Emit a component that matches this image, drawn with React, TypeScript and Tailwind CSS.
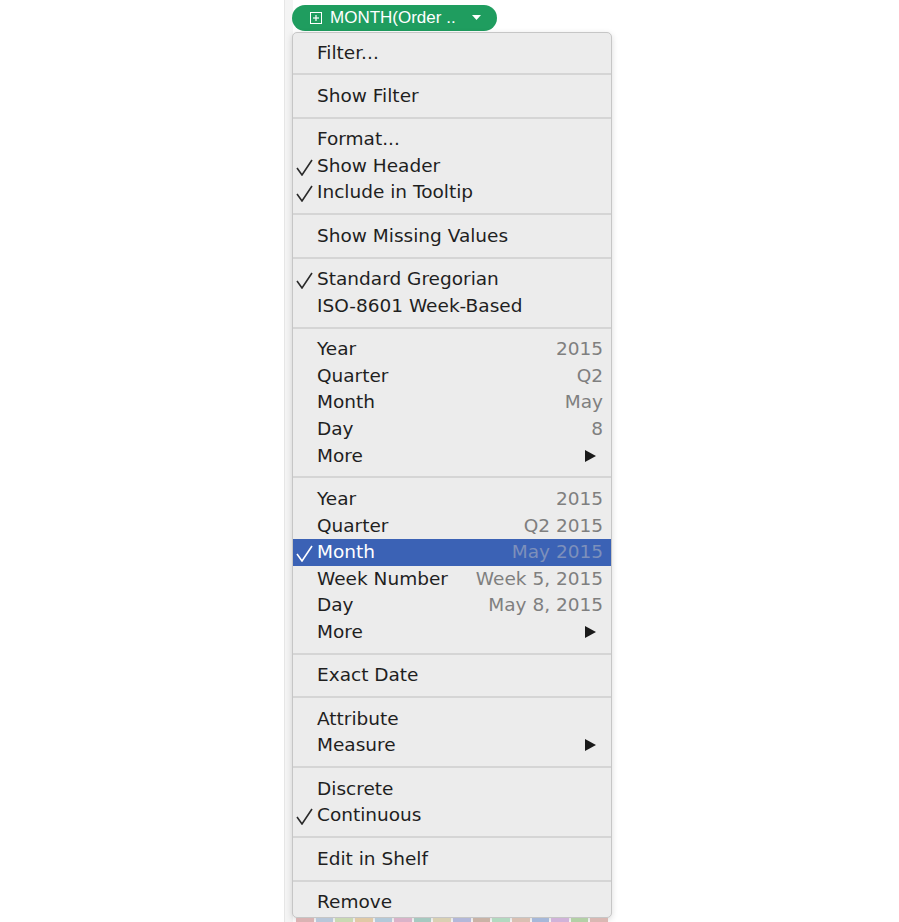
import React from 'react';

type Row = {
  label: string;
  checked?: boolean;
  value?: string;
  submenu?: boolean;
  selected?: boolean;
};

// each inner array is one block between separators
const groups: Row[][] = [
  [{ label: 'Filter...' }],
  [{ label: 'Show Filter' }],
  [
    { label: 'Format...' },
    { label: 'Show Header', checked: true },
    { label: 'Include in Tooltip', checked: true },
  ],
  [{ label: 'Show Missing Values' }],
  [
    { label: 'Standard Gregorian', checked: true },
    { label: 'ISO-8601 Week-Based' },
  ],
  [
    { label: 'Year', value: '2015' },
    { label: 'Quarter', value: 'Q2' },
    { label: 'Month', value: 'May' },
    { label: 'Day', value: '8' },
    { label: 'More', submenu: true },
  ],
  [
    { label: 'Year', value: '2015' },
    { label: 'Quarter', value: 'Q2 2015' },
    { label: 'Month', value: 'May 2015', checked: true, selected: true },
    { label: 'Week Number', value: 'Week 5, 2015' },
    { label: 'Day', value: 'May 8, 2015' },
    { label: 'More', submenu: true },
  ],
  [{ label: 'Exact Date' }],
  [{ label: 'Attribute' }, { label: 'Measure', submenu: true }],
  [{ label: 'Discrete' }, { label: 'Continuous', checked: true }],
  [{ label: 'Edit in Shelf' }],
  [{ label: 'Remove' }],
];

const Check = ({ white }: { white?: boolean }) => (
  <svg width="17" height="17" viewBox="0 0 17 17" className="ml-[3px] mt-[2px]">
    <polyline
      points="1,9 6,16 16,1"
      fill="none"
      stroke={white ? '#ffffff' : '#2a2a2a'}
      strokeWidth="1.6"
      strokeLinejoin="miter"
    />
  </svg>
);

const Arrow = ({ white }: { white?: boolean }) => (
  <svg width="11" height="12" viewBox="0 0 11 12" className="mr-[7px]">
    <polygon points="0,0 11,6 0,12" fill={white ? '#ffffff' : '#1a1a1a'} />
  </svg>
);

const MenuRow = ({ row }: { row: Row }) => (
  <div
    className={
      'flex h-[26.6px] items-center pr-[8px] ' +
      (row.selected ? 'bg-[#3b62b5] text-white' : 'text-[#1f1f1f]')
    }
  >
    <div className="flex w-[24px] shrink-0 items-center">
      {row.checked && <Check white={row.selected} />}
    </div>
    <span className="flex-1 whitespace-nowrap">{row.label}</span>
    {row.value && (
      <span className={'whitespace-nowrap ' + (row.selected ? 'text-[#7d90bb]' : 'text-[#7f7f7f]')}>
        {row.value}
      </span>
    )}
    {row.submenu && <Arrow white={row.selected} />}
  </div>
);

const stripColors = [
  '#d9b3b3', '#b8c7d9', '#c9d9b3', '#e0c9a6', '#b3c9d9', '#d9b3c9', '#a6c9c0', '#d9d0b3',
  '#b3b8d9', '#c9b3a6', '#b3d9c0', '#d9c0b3', '#a6b8d9', '#d0b3d9', '#b3d0a6', '#d9b8b3',
];

export default function App() {
  return (
    <div className="flex h-[922px] w-[899px] overflow-hidden bg-white font-['DejaVu_Sans',sans-serif]">
      <div className="w-[284px] shrink-0" />
      {/* background panel edge behind the menu */}
      <div className="w-[9px] shrink-0 border-l border-[#e6e6e6] bg-[#f4f4f4]" />

      <div className="flex w-[320px] shrink-0 flex-col pt-[5px] -ml-[1px]">
        {/* shelf pill */}
        <div className="flex h-[26px] w-[205px] items-center rounded-full bg-[#1f9d5f] pl-[18px] text-white">
          <svg width="12" height="12" viewBox="0 0 12 12" className="shrink-0">
            <rect x="0.5" y="0.5" width="11" height="11" fill="none" stroke="#fff" strokeWidth="1" />
            <line x1="3" y1="6" x2="9" y2="6" stroke="#fff" strokeWidth="1.2" />
            <line x1="6" y1="3" x2="6" y2="9" stroke="#fff" strokeWidth="1.2" />
          </svg>
          <span className="ml-[8px] whitespace-nowrap font-['Liberation_Sans',sans-serif] text-[17px] leading-none">
            MONTH(Order ..
          </span>
          <svg width="9" height="5" viewBox="0 0 9 5" className="ml-[16px] shrink-0">
            <polygon points="0,0 9,0 4.5,5" fill="#fff" />
          </svg>
        </div>

        {/* context menu */}
        <div className="mt-[1px] rounded-[5px] border border-[#c6c6c6] bg-[#ececec] text-[18.5px] leading-none shadow-[0_2px_6px_rgba(0,0,0,0.15)]">
          {groups.map((g, i) => (
            <React.Fragment key={i}>
              {i > 0 && <div className="h-[2px] bg-[#d5d5d5]" />}
              <div
                className={
                  i === 0 ? 'pt-[6.5px] pb-[7.4px]' : i === groups.length - 1 ? 'pt-[7.4px] pb-[1.5px]' : 'py-[7.4px]'
                }
              >
                {g.map((row, j) => (
                  <MenuRow key={j} row={row} />
                ))}
              </div>
            </React.Fragment>
          ))}
        </div>

        {/* bit of the chart showing under the menu */}
        <div className="mx-[4px] flex h-[4px] gap-[2px]">
          {stripColors.map((c, i) => (
            <div key={i} className="flex-1" style={{ backgroundColor: c }} />
          ))}
        </div>
      </div>
    </div>
  );
}
